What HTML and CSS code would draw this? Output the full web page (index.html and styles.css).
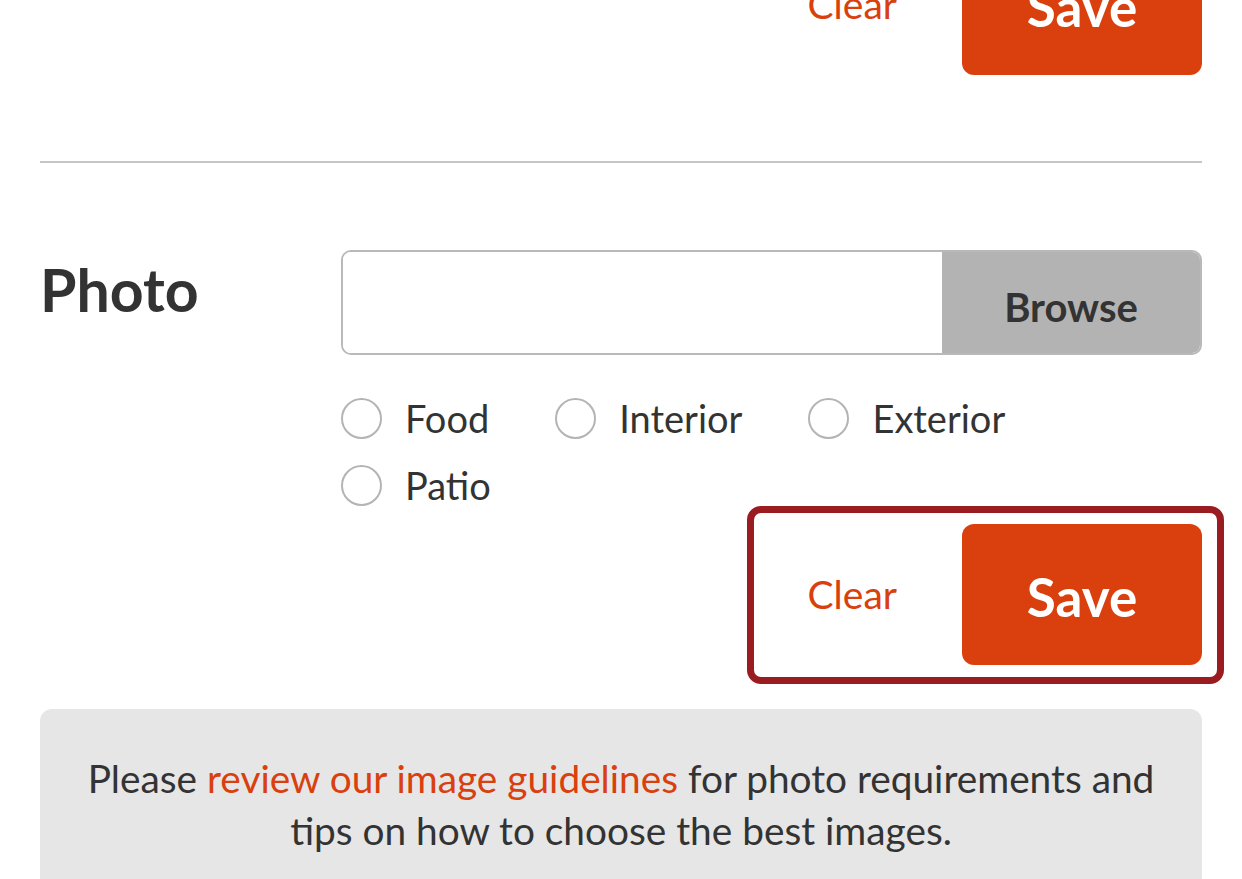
FILE: index.html
```html
<!DOCTYPE html>
<html lang="en">
<head>
<meta charset="utf-8">
<title>Photo</title>
<link rel="stylesheet" href="styles.css">
</head>
<body>
<div class="page">
  <div class="actions actions-top">
    <div class="actions-inner">
      <a class="clear" href="#">Clear</a>
      <button class="save" type="button">Save</button>
    </div>
  </div>

  <hr class="divider">

  <div class="field-row">
    <div class="field-label">Photo</div>
    <div class="field-body">
      <div class="file-input">
        <div class="file-name"></div>
        <div class="browse">Browse</div>
      </div>
      <div class="radios">
        <label class="radio"><span class="circle"></span><span class="radio-text">Food</span></label>
        <label class="radio"><span class="circle"></span><span class="radio-text">Interior</span></label>
        <label class="radio"><span class="circle"></span><span class="radio-text">Exterior</span></label>
        <label class="radio"><span class="circle"></span><span class="radio-text">Patio</span></label>
      </div>
      <div class="actions actions-photo">
        <div class="actions-inner">
          <span class="highlight"></span>
          <a class="clear" href="#">Clear</a>
          <button class="save" type="button">Save</button>
        </div>
      </div>
    </div>
  </div>

  <div class="note">
    <p>Please <a href="#">review our image guidelines</a> for photo requirements and tips on how to choose the best images.</p>
  </div>
</div>
</body>
</html>
```

FILE: styles.css
```css
html, body {
  margin: 0;
  padding: 0;
  background: #ffffff;
}

body {
  font-family: "Lato", "Open Sans", sans-serif;
  color: #333333;
  overflow: hidden;
  height: 879px;
}

.page {
  padding: 0 40px;
}

.actions {
  display: flex;
  justify-content: flex-end;
}

.actions-top {
  margin-top: -66px;
}

.actions-inner {
  position: relative;
  display: flex;
  align-items: center;
  gap: 65px;
}

.clear {
  color: #d9400e;
  text-decoration: none;
  font-size: 39px;
  line-height: 1.2;
}

.save {
  width: 240px;
  height: 141px;
  border: none;
  border-radius: 12px;
  background: #d9400e;
  color: #ffffff;
  font-family: "Lato", "Open Sans", sans-serif;
  font-weight: 700;
  font-size: 53px;
  padding: 4px 0 0 0;
  cursor: pointer;
}

.divider {
  border: none;
  height: 2px;
  background: #c6c6c6;
  margin: 86px 0 0 0;
}

.field-row {
  display: flex;
  margin-top: 87px;
}

.field-label {
  width: 301px;
  flex: none;
  font-weight: 700;
  font-size: 59px;
  line-height: 1.2;
  padding-top: 5px;
  color: #333333;
}

.field-body {
  flex: 1;
}

.file-input {
  display: flex;
  height: 105px;
  box-sizing: border-box;
  border: 2px solid #b9b9b9;
  border-radius: 10px;
  overflow: hidden;
}

.file-name {
  flex: 1;
  background: #ffffff;
}

.browse {
  width: 258px;
  flex: none;
  background: #b3b3b3;
  display: flex;
  align-items: center;
  justify-content: center;
  font-weight: 700;
  font-size: 40px;
  padding-top: 8px;
  box-sizing: border-box;
  color: #333333;
}

.radios {
  display: flex;
  flex-wrap: wrap;
  column-gap: 66px;
  row-gap: 20px;
  margin-top: 40px;
}

.radio {
  display: flex;
  align-items: center;
  gap: 23px;
  height: 47px;
  font-size: 38px;
}

.circle {
  width: 41px;
  height: 41px;
  box-sizing: border-box;
  border: 2.5px solid #b4b4b4;
  border-radius: 50%;
  background: #ffffff;
  flex: none;
}

.radio-text {
  line-height: 1.2;
  color: #333333;
}

.actions-photo {
  margin-top: 15px;
}

.highlight {
  position: absolute;
  top: -18px;
  bottom: -19px;
  left: -61px;
  right: -22px;
  border: 7px solid #9a1c20;
  border-radius: 14px;
  pointer-events: none;
}

.note {
  margin-top: 44px;
  background: #e6e6e6;
  border-radius: 12px;
  padding: 43px 30px 60px;
  text-align: center;
}

.note p {
  margin: 0;
  font-size: 38.8px;
  line-height: 52px;
  color: #333333;
}

.note a {
  color: #d9400e;
  text-decoration: none;
}
```
